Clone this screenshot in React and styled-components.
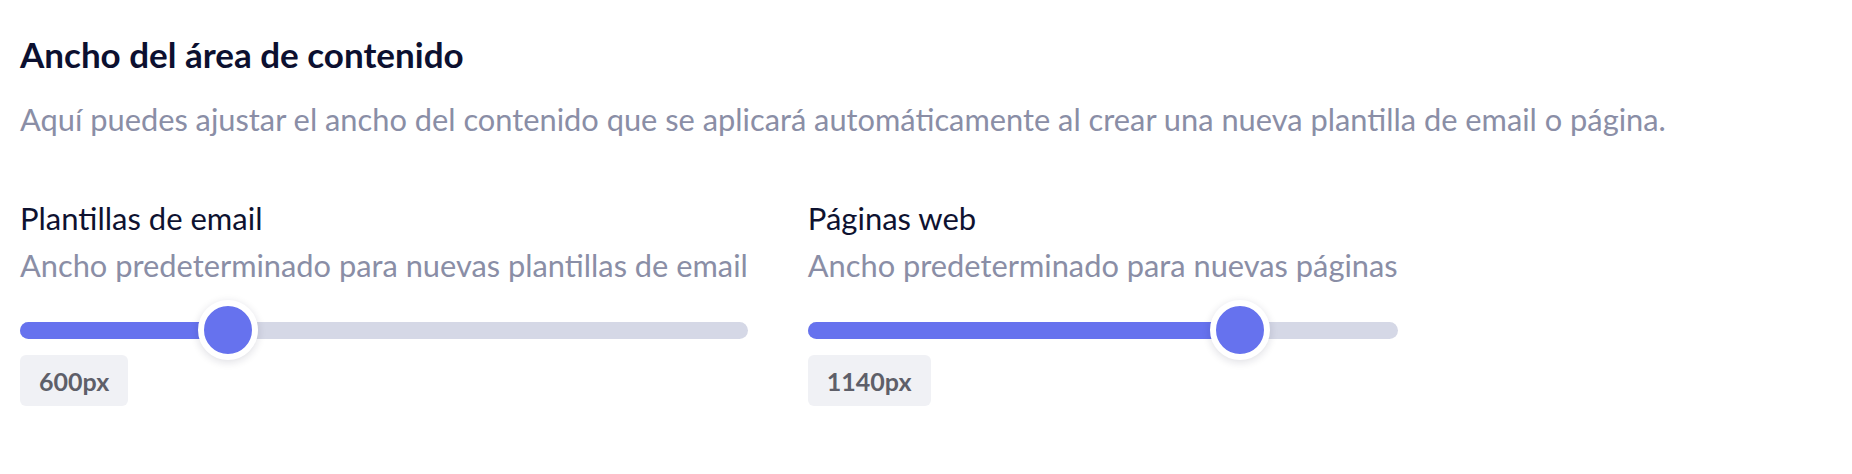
import React from 'react';
import styled, { createGlobalStyle } from 'styled-components';

const GlobalStyle = createGlobalStyle`
  body {
    margin: 0;
    background: #ffffff;
    font-family: Lato, "Open Sans", sans-serif;
  }
`;

const Section = styled.section`
  padding: 34px 20px 0 20px;
`;

const Title = styled.h2`
  margin: 0;
  font-size: 35px;
  line-height: 40px;
  font-weight: 700;
  color: #0c1030;
`;

const Description = styled.p`
  margin: 26px 0 0 0;
  font-size: 30.8px;
  line-height: 40px;
  color: #8a8ea6;
`;

const Columns = styled.div`
  display: flex;
  gap: 60px;
  margin-top: 58px;
  align-items: flex-start;
`;

const Column = styled.div`
  display: flex;
  flex-direction: column;
`;

const Label = styled.div`
  font-size: 31px;
  line-height: 40px;
  color: #0e1230;
`;

const Hint = styled.div`
  margin-top: 8px;
  font-size: 30.8px;
  line-height: 40px;
  color: #8a8ea6;
`;

const SliderRoot = styled.div`
  position: relative;
  height: 48px;
  margin-top: 20px;
  display: flex;
  align-items: center;
`;

const Track = styled.div`
  position: relative;
  width: 100%;
  height: 17px;
  border-radius: 9px;
  background: #d5d8e6;
  overflow: hidden;
`;

const Fill = styled.div`
  height: 100%;
  background: #6672ee;
`;

const Thumb = styled.div`
  position: absolute;
  top: 50%;
  width: 48px;
  height: 48px;
  border-radius: 50%;
  background: #6672ee;
  border: 6px solid #ffffff;
  box-shadow: 0 2px 8px rgba(20, 24, 60, 0.14);
  transform: translate(-50%, -50%);
`;

const Badge = styled.div`
  align-self: flex-start;
  display: inline-flex;
  align-items: center;
  height: 51px;
  margin-top: 1px;
  padding: 0 19px;
  border-radius: 6px;
  background: #f0f1f5;
  color: #5e5f69;
  font-size: 25px;
  font-weight: 700;
`;

const thumbRadius = 30;

function Slider({ value, min, max }) {
  const p = (value - min) / (max - min);
  const left = `calc(${thumbRadius}px + ${p} * (100% - ${thumbRadius * 2}px))`;
  return (
    <SliderRoot>
      <Track>
        <Fill style={{ width: left }} />
      </Track>
      <Thumb style={{ left }} />
    </SliderRoot>
  );
}

function WidthSetting({ label, hint, value, min, max }) {
  return (
    <Column>
      <Label>{label}</Label>
      <Hint>{hint}</Hint>
      <Slider value={value} min={min} max={max} />
      <Badge>{value}px</Badge>
    </Column>
  );
}

export default function App() {
  return (
    <>
      <GlobalStyle />
      <Section>
        <Title>Ancho del área de contenido</Title>
        <Description>
          Aquí puedes ajustar el ancho del contenido que se aplicará automáticamente al crear una nueva plantilla de email o página.
        </Description>
        <Columns>
          <WidthSetting
            label="Plantillas de email"
            hint="Ancho predeterminado para nuevas plantillas de email"
            value={600}
            min={310}
            max={1400}
          />
          <WidthSetting
            label="Páginas web"
            hint="Ancho predeterminado para nuevas páginas"
            value={1140}
            min={320}
            max={1400}
          />
        </Columns>
      </Section>
    </>
  );
}
